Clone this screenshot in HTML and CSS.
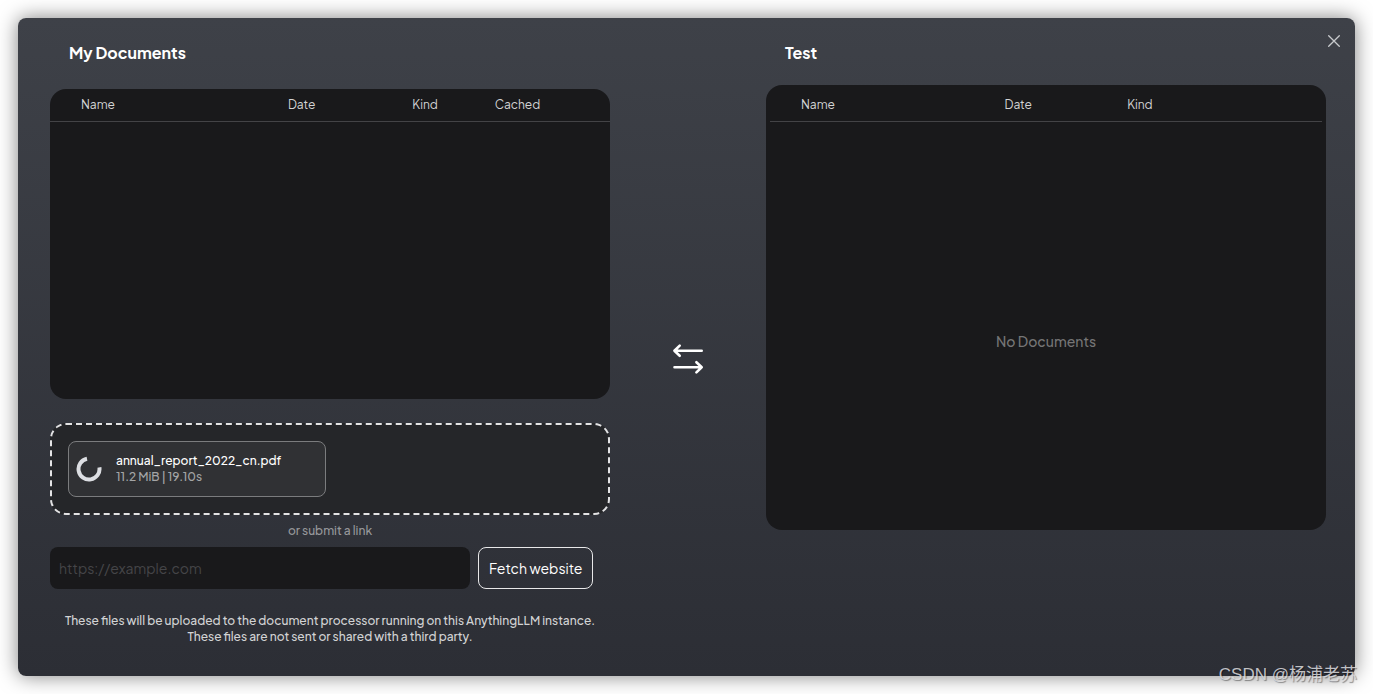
FILE: index.html
```html
<!DOCTYPE html>
<html lang="en">
<head>
<meta charset="utf-8">
<meta name="viewport" content="width=device-width, initial-scale=1">
<title>My Documents</title>
<link rel="stylesheet" href="styles.css">
</head>
<body>
<main class="modal">
  <button class="close" type="button" aria-label="Close">
    <svg width="12" height="12" viewBox="0 0 12 12" fill="none" stroke="currentColor" stroke-width="1.3" stroke-linecap="round"><path d="M.7.7l10.6 10.6M11.3.7L.7 11.3"/></svg>
  </button>
  <section class="column">
    <h2 class="title title-left">My Documents</h2>
    <div class="panel panel-source">
      <table class="files">
        <colgroup><col class="w-name"><col class="w-date"><col class="w-kind"><col></colgroup>
        <thead><tr><th>Name</th><th>Date</th><th>Kind</th><th>Cached</th></tr></thead>
      </table>
    </div>
    <div class="dropzone">
      <div class="upload">
        <svg class="spinner" width="26" height="26" viewBox="0 0 26 26" fill="none" stroke="#dcdee2" stroke-width="4"><path d="M11 2.700A10.500 10.500 0 1 0 23.400 11.400"/></svg>
        <div class="upload-info">
          <p class="upload-name">annual_report_2022_cn.pdf</p>
          <p class="upload-meta">11.2 MiB | 19.10s</p>
        </div>
      </div>
    </div>
    <p class="hint">or submit a link</p>
    <form class="link-form">
      <input class="link-input" type="url" placeholder="https://example.com" aria-label="Website link">
      <button class="fetch" type="button">Fetch website</button>
    </form>
    <p class="notice">These files will be uploaded to the document processor running on this AnythingLLM instance.<br>These files are not sent or shared with a third party.</p>
  </section>
  <div class="swap">
    <svg width="32" height="32" viewBox="0 0 32 32" fill="none" stroke="#fff" stroke-width="2.600" stroke-linecap="round" stroke-linejoin="round"><path d="M29.700 7.700H2.500M7.700 2.600L2.400 7.700l5.300 5.100M2.500 24.300h27.200M24.400 19.200l5.300 5.100-5.300 5.100"/></svg>
  </div>
  <section class="column">
    <h2 class="title title-right">Test</h2>
    <div class="panel panel-workspace">
      <table class="files">
        <colgroup><col class="w-name"><col class="w-date"><col></colgroup>
        <thead><tr><th>Name</th><th>Date</th><th>Kind</th></tr></thead>
      </table>
      <p class="empty">No Documents</p>
    </div>
  </section>
  <div class="watermark">CSDN @杨浦老苏</div>
</main>
</body>
</html>
```
FILE: styles.css
```css
* { box-sizing: border-box; }
body {
  margin: 0;
  padding: 18px;
  background: #fff;
  color: #fff;
  font-family: "Plus Jakarta Sans", Inter, "Noto Sans CJK SC", sans-serif;
  font-size: 12px;
  line-height: 16px;
}
p, h2 { margin: 0; }
button, input { font-family: inherit; font-size: 14px; }
.modal {
  position: relative;
  display: grid;
  grid-template-columns: 560fr 156fr 560fr;
  padding: 23px 29px 31px 32px;
  border-radius: 8px;
  background: linear-gradient(180deg, #3e4148 0%, #2c2e35 100%);
  box-shadow: 0 0 20px rgba(0, 0, 0, 0.5);
}
.column { min-width: 0; }
.close {
  position: absolute;
  top: 13px;
  right: 11px;
  display: flex;
  padding: 4px;
  border: 0;
  background: none;
  color: #c8cacd;
}
.title {
  font-size: 16px;
  line-height: 24px;
  font-weight: 700;
}
.title-left { padding-left: 19px; margin-bottom: 24px; }
.title-right { padding-left: 19px; margin-bottom: 20px; }
.panel {
  border-radius: 16px;
  background: #19191b;
}
.panel-source { height: 310px; }
.panel-workspace {
  display: flex;
  flex-direction: column;
  height: 445px;
  padding: 4px;
}
.files {
  width: 100%;
  table-layout: fixed;
  border-collapse: separate;
  border-spacing: 0;
}
.files th {
  padding: 8px 0;
  border-bottom: 1px solid #434346;
  color: #d3d3d4;
  font-weight: 400;
  text-align: left;
}
.files th:first-child { padding-left: 31px; }
.w-name { width: 42.5%; }
.w-date { width: 22.2%; }
.w-kind { width: 14.7%; }
.empty {
  flex: 1;
  display: flex;
  align-items: center;
  justify-content: center;
  padding-top: 34px;
  color: #757576;
  font-size: 14px;
  font-weight: 500;
}
.dropzone {
  display: flex;
  margin-top: 24px;
  padding: 16px;
  border: 2px dashed #e3e3e4;
  border-radius: 16px;
  background: #252629;
}
.upload {
  display: flex;
  align-items: center;
  gap: 14px;
  width: 258px;
  height: 56px;
  padding: 0 7px;
  border: 1px solid #7b7c7e;
  border-radius: 8px;
  background: #303134;
}
.upload-name { font-weight: 500; }
.upload-meta { color: #a4a5a6; font-weight: 500; }
.hint {
  margin: 8px 0;
  color: #97989b;
  font-weight: 500;
  text-align: center;
}
.link-form { display: flex; gap: 8px; }
.link-input {
  width: 75%;
  height: 42px;
  padding: 0 9px;
  border: 0;
  border-radius: 8px;
  background: #19191b;
  color: #fff;
}
.link-input::placeholder { color: #454548; opacity: 1; }
.fetch {
  padding: 0 10px;
  border: 1px solid #e8e8e9;
  border-radius: 8px;
  background: transparent;
  color: #fff;
  white-space: nowrap;
}
.notice {
  margin-top: 24px;
  color: #d2d3d4;
  font-weight: 500;
  text-align: center;
}
.swap {
  display: flex;
  justify-content: center;
  align-items: center;
  padding-top: 31px;
}
.watermark {
  position: absolute;
  right: -2px;
  bottom: -11px;
  color: rgba(222, 222, 224, 0.85);
  font-family: "Liberation Sans", "Noto Sans CJK SC", sans-serif;
  font-size: 17px;
  line-height: 24px;
  text-shadow: 1px 1px 1px rgba(0, 0, 0, 0.4);
  white-space: nowrap;
}
```
